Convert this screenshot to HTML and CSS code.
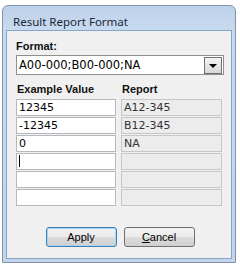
FILE: index.html
```html
<!DOCTYPE html>
<html lang="en">
<head>
    <meta charset="UTF-8">
    <title>Result Report Format</title>
    <link rel="stylesheet" href="styles.css">
</head>
<body>

    <div class="dialog">
        <div class="titlebar">Result Report Format</div>
        <div class="client">
            <div class="label">Format:</div>
            <div class="combo">
                <span class="combo-text">A00-000;B00-000;NA</span>
                <span class="drop"><span class="arrow"></span></span>
            </div>

            <div class="cols heads">
                <div class="head">Example Value</div>
                <div class="head">Report</div>
            </div>
            <div class="cols rows">
                <div class="field">12345</div>
                <div class="field out">A12-345</div>
                <div class="field">-12345</div>
                <div class="field out">B12-345</div>
                <div class="field">0</div>
                <div class="field out">NA</div>
                <div class="field"><span class="caret"></span></div>
                <div class="field out"></div>
                <div class="field"></div>
                <div class="field out"></div>
                <div class="field"></div>
                <div class="field out"></div>
            </div>

            <div class="buttons">
                <button class="button default">Apply</button>
                <button class="button"><u>C</u>ancel</button>
            </div>
        </div>
    </div>

</body>
</html>
```

FILE: styles.css
```css
body {
    margin: 0;
    background: #fff;
}
.dialog {
    margin: 5px 0 0 2px;
    width: 234px;
    height: 258px;
    box-sizing: border-box;
    border: 1px solid #8193ab;
    border-radius: 6px 6px 0 0;
    background: linear-gradient(#bcd1ea, #c8daee 24px, #c3d5eb);
    padding: 0 3px 3px;
    display: flex;
    flex-direction: column;
}
.titlebar {
    height: 24px;
    box-sizing: border-box;
    padding: 8px 0 0 7px;
    font-family: "Noto Sans", sans-serif;
    font-size: 11.5px;
    line-height: 16px;
    color: #1b2838;
    white-space: nowrap;
}
.client {
    flex: 1;
    background: #f0f0f0;
    border: 1px solid #86a3c8;
    padding: 9px 7px 0 9px;
    font-family: "DejaVu Sans", sans-serif;
    font-size: 11px;
    color: #000;
}
.label, .head {
    font-family: "Liberation Sans", Arial, sans-serif;
    font-weight: bold;
    font-size: 11px;
    line-height: 13px;
    color: #111;
}
.combo {
    margin-top: 2px;
    height: 20px;
    box-sizing: border-box;
    border: 1px solid #8e8f8f;
    background: #fff;
    display: flex;
    align-items: center;
    justify-content: space-between;
}
.combo-text {
    padding-left: 2px;
    font-size: 11.5px;
}
.drop {
    width: 18px;
    height: 17px;
    margin-right: 1px;
    box-sizing: border-box;
    border: 1px solid #707070;
    background: linear-gradient(#f4f4f4, #e6e6e6 50%, #d8d8d8);
    display: flex;
    align-items: center;
    justify-content: center;
}
.arrow {
    width: 0;
    height: 0;
    border-left: 4px solid transparent;
    border-right: 4px solid transparent;
    border-top: 4px solid #000;
    margin-top: 1px;
}
.cols {
    display: grid;
    grid-template-columns: 100px 101px;
    column-gap: 5px;
}
.heads {
    margin-top: 8px;
}
.head {
    padding-left: 1px;
}
.rows {
    margin-top: 3px;
    grid-auto-rows: 17px;
    row-gap: 1px;
}
.field {
    box-sizing: border-box;
    border: 1px solid #b5b8bd;
    background: #fff;
    padding-left: 2px;
    line-height: 15px;
    white-space: nowrap;
}
.field.out {
    background: #ececec;
    border-color: #c6c6c6;
    color: #333;
}
.caret {
    display: inline-block;
    width: 1px;
    height: 12px;
    background: #000;
    vertical-align: -2px;
}
.buttons {
    margin-top: 21px;
    display: flex;
    justify-content: center;
    gap: 7px;
}
.button {
    width: 71px;
    height: 20px;
    padding: 0;
    border: 1px solid #707070;
    border-radius: 3px;
    background: linear-gradient(#f2f2f2, #ebebeb 50%, #dddddd 51%, #cfcfcf);
    font-family: "Liberation Sans", Arial, sans-serif;
    font-size: 11px;
    color: #000;
}
.button.default {
    border-color: #3c7fb1;
    box-shadow: inset 0 0 0 1px #a6d8f2;
}
```
